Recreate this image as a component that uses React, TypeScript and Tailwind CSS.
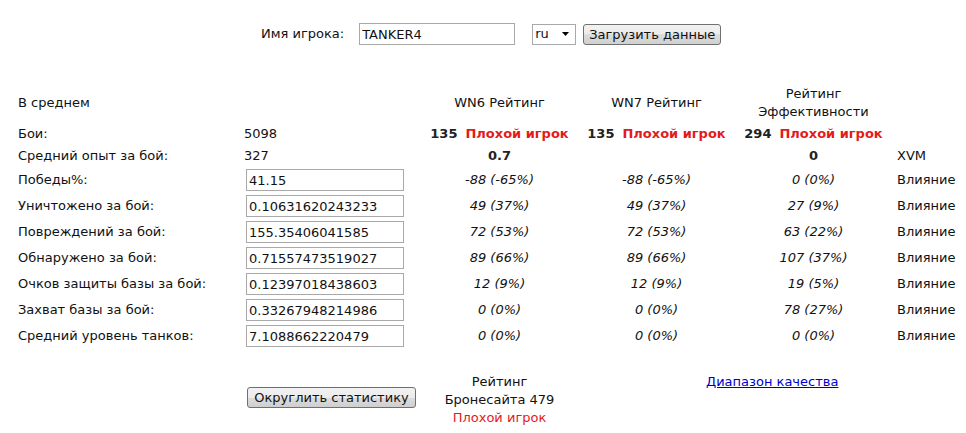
import React from 'react';

const FONT = { fontFamily: '"DejaVu Sans", Verdana, sans-serif' };

type Row = { label: string; value: string; wn6: string; wn7: string; eff: string };

const rows: Row[] = [
  { label: 'Победы%:', value: '41.15', wn6: '-88 (-65%)', wn7: '-88 (-65%)', eff: '0 (0%)' },
  { label: 'Уничтожено за бой:', value: '0.10631620243233', wn6: '49 (37%)', wn7: '49 (37%)', eff: '27 (9%)' },
  { label: 'Повреждений за бой:', value: '155.35406041585', wn6: '72 (53%)', wn7: '72 (53%)', eff: '63 (22%)' },
  { label: 'Обнаружено за бой:', value: '0.71557473519027', wn6: '89 (66%)', wn7: '89 (66%)', eff: '107 (37%)' },
  { label: 'Очков защиты базы за бой:', value: '0.12397018438603', wn6: '12 (9%)', wn7: '12 (9%)', eff: '19 (5%)' },
  { label: 'Захват базы за бой:', value: '0.33267948214986', wn6: '0 (0%)', wn7: '0 (0%)', eff: '78 (27%)' },
  { label: 'Средний уровень танков:', value: '7.1088662220479', wn6: '0 (0%)', wn7: '0 (0%)', eff: '0 (0%)' },
];

const grid = 'grid grid-cols-[226px_177px_157px_157px_157px_1fr] items-center';

function WinButton({ children, className }: { children: React.ReactNode; className?: string }) {
  return (
    <button
      className={`h-[21px] whitespace-nowrap rounded-[3px] border border-[#707070] bg-[linear-gradient(#f2f2f2,#ebebeb_50%,#dddddd_50%,#cfcfcf)] px-[4px] text-[13px] leading-none text-[#111] ${className ?? ''}`}
      style={FONT}
    >
      {children}
    </button>
  );
}

function Rating({ score }: { score: string }) {
  return (
    <span className="font-bold">
      <span className="text-[#222]">{score}</span>
      <span className="ml-[8px] text-[#e31b1b]">Плохой игрок</span>
    </span>
  );
}

export default function App() {
  return (
    <div className="h-[433px] w-[966px] overflow-hidden bg-white text-[13px] text-[#111]" style={FONT}>
      {/* Player form */}
      <div className="flex h-[46px] items-end pb-[1px] pl-[261px]">
        <div className="flex items-center">
          <span className="mr-[15px]">Имя игрока:</span>
          <input
            defaultValue="TANKER4"
            className="h-[22px] w-[156px] border border-[#a9a9a9] px-[2px] text-[13px] outline-none"
            style={FONT}
          />
          <div className="ml-[17px] flex h-[21px] w-[44px] items-center justify-between border border-[#a9a9a9] pl-[2px] pr-[6px]">
            <span>ru</span>
            <svg width="7" height="4" viewBox="0 0 7 4">
              <path d="M0 0h7L3.5 4z" fill="#000" />
            </svg>
          </div>
          <WinButton className="ml-[7px] w-[138px]">Загрузить данные</WinButton>
        </div>
      </div>

      {/* Stats table */}
      <div className="mt-[37px] pl-[18px]">
        <div className={`${grid} h-[40px]`}>
          <span>В среднем</span>
          <span />
          <span className="text-center">WN6 Рейтинг</span>
          <span className="text-center">WN7 Рейтинг</span>
          <span className="text-center leading-[18px]">
            Рейтинг
            <br />
            Эффективности
          </span>
          <span />
        </div>

        <div className={`${grid} h-[22px]`}>
          <span>Бои:</span>
          <span>5098</span>
          <span className="text-center"><Rating score="135" /></span>
          <span className="text-center"><Rating score="135" /></span>
          <span className="text-center"><Rating score="294" /></span>
          <span />
        </div>

        <div className={`${grid} h-[22px]`}>
          <span>Средний опыт за бой:</span>
          <span>327</span>
          <span className="text-center font-bold text-[#222]">0.7</span>
          <span />
          <span className="text-center font-bold text-[#222]">0</span>
          <span className="pl-[5px]">XVM</span>
        </div>

        {rows.map((r) => (
          <div key={r.label} className={`${grid} h-[26px]`}>
            <span>{r.label}</span>
            <span>
              <input
                defaultValue={r.value}
                className="ml-[2px] block h-[22px] w-[158px] border border-[#a9a9a9] px-[2px] text-[13px] outline-none"
                style={FONT}
              />
            </span>
            <span className="text-center italic">{r.wn6}</span>
            <span className="text-center italic">{r.wn7}</span>
            <span className="text-center italic">{r.eff}</span>
            <span className="pl-[5px]">Влияние</span>
          </div>
        ))}

        {/* Summary */}
        <div className={`${grid} mt-[24px] items-start`}>
          <span />
          <span className="pt-[14px]">
            <WinButton className="ml-[3px] w-[169px]">Округлить статистику</WinButton>
          </span>
          <span className="text-center leading-[18px]">
            Рейтинг
            <br />
            Бронесайта 479
            <br />
            <span className="text-[#e31b1b]">Плохой игрок</span>
          </span>
          <span className="col-span-2 pl-[128px] leading-[18px]">
            <a href="#" className="text-[#0000cc] underline">Диапазон качества</a>
          </span>
          <span />
        </div>
      </div>
    </div>
  );
}
